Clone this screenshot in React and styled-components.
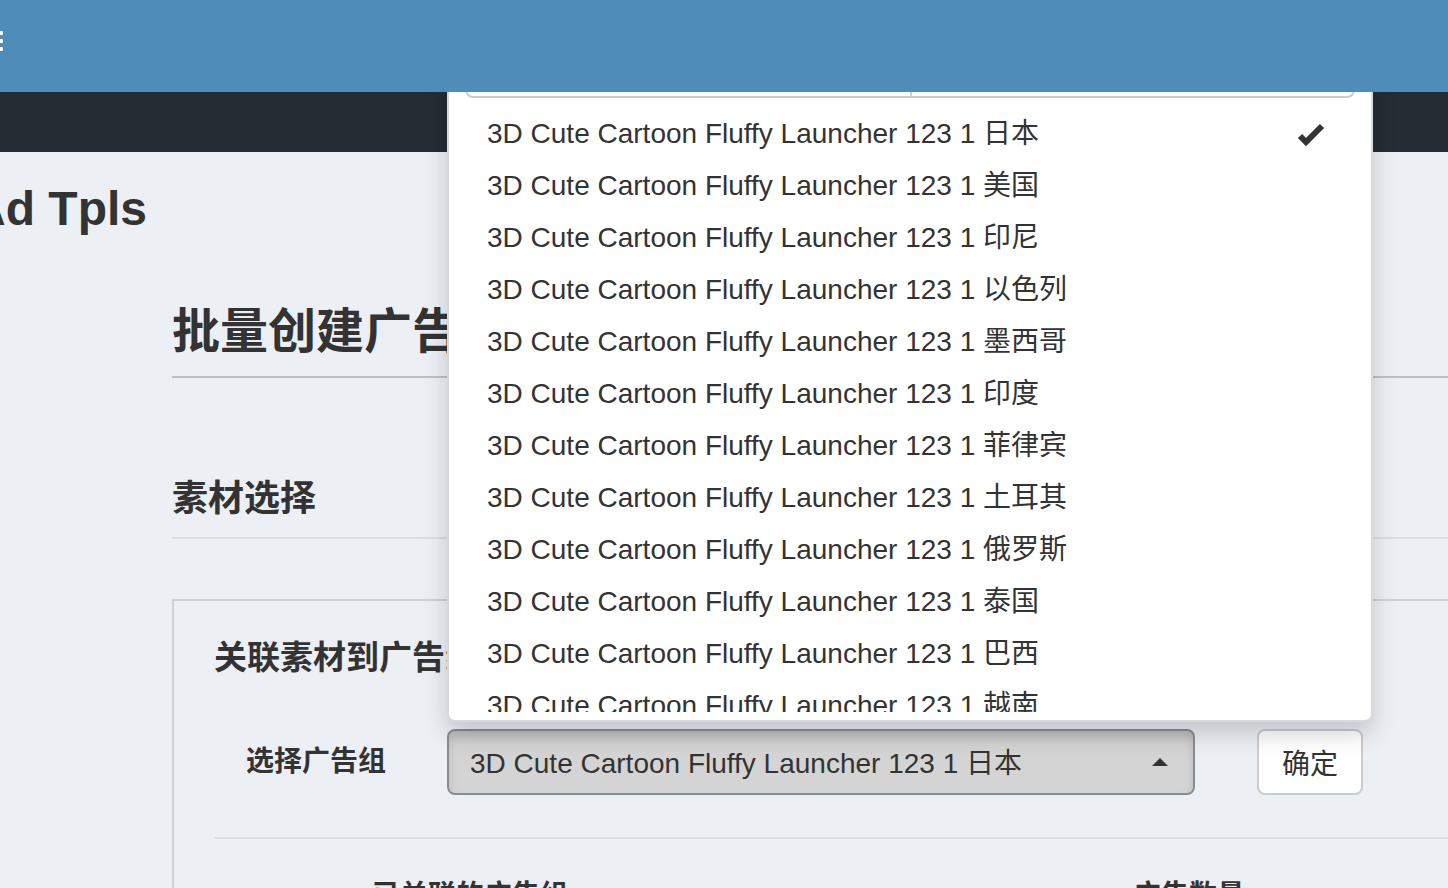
import React from 'react';
import styled, { createGlobalStyle } from 'styled-components';

const GlobalStyle = createGlobalStyle`
  html, body {
    margin: 0;
    padding: 0;
    overflow: hidden;
    background: #eceff4;
    font-family: "Liberation Sans", "Noto Sans CJK SC", sans-serif;
    color: #333;
  }
  * { box-sizing: border-box; }
`;

const Page = styled.div`
  width: 1448px;
  height: 888px;
  overflow: hidden;
  background: #eceff4;
`;

// blue top navbar, sits above the open dropdown
const TopBar = styled.header`
  position: relative;
  z-index: 20;
  height: 92px;
  background: #4e8cb9;
  display: flex;
  align-items: flex-start;
  padding-top: 31px;
`;

const MenuToggle = styled.div`
  margin-left: -18px;
  width: 21px;
  display: flex;
  flex-direction: column;
  gap: 4px;

  span {
    display: block;
    height: 4px;
    background: #fff;
    border-radius: 1px;
  }
`;

const SubBar = styled.div`
  height: 60px;
  background: #252c33;
`;

const Main = styled.main`
  padding-bottom: 40px;
`;

const PageTitle = styled.h1`
  margin: 30px 0 0 -29px;
  font-size: 48px;
  line-height: 53px;
  font-weight: 700;
  color: #333;
`;

const Content = styled.div`
  margin-left: 172px;
  width: 1400px;
`;

const PageHeader = styled.h2`
  margin: 65px 0 0;
  font-size: 48px;
  line-height: 60px;
  font-weight: 700;
  padding: 2px 0 14px;
  border-bottom: 2px solid #bdbfc3;
`;

const SectionTitle = styled.h3`
  margin: 97px 0 0;
  font-size: 36px;
  line-height: 44px;
  font-weight: 700;
  padding: 2px 0 16px;
  border-bottom: 2px solid #dcdde0;
`;

const Panel = styled.section`
  margin-top: 60px;
  border-top: 2px solid #cfd0d3;
  border-left: 2px solid #cfd0d3;
  padding: 37px 0 0 40px;
`;

const PanelTitle = styled.h4`
  margin: 0;
  font-size: 33px;
  line-height: 40px;
  font-weight: 700;
`;

const FormRow = styled.div`
  margin-top: 51px;
  display: flex;
  align-items: center;
  height: 66px;
`;

const FormLabel = styled.label`
  width: 233px;
  flex-shrink: 0;
  padding-left: 32px;
  font-size: 28px;
  font-weight: 700;
  line-height: 66px;
`;

const SelectWrap = styled.div`
  position: relative;
  width: 748px;
  flex-shrink: 0;
`;

const SelectButton = styled.div`
  height: 66px;
  display: flex;
  align-items: center;
  justify-content: space-between;
  padding: 0 25px 3px 21px;
  background: #d4d4d4;
  border: 2px solid #8c8c8c;
  border-radius: 8px;
  box-shadow: inset 0 6px 10px rgba(0, 0, 0, 0.125);
  font-size: 28px;
  color: #333;
  white-space: nowrap;
`;

const Caret = styled.span`
  width: 0;
  height: 0;
  margin-top: 3px;
  border-left: 8px solid transparent;
  border-right: 8px solid transparent;
  border-bottom: 8px solid #333;
`;

const DropMenu = styled.div`
  position: absolute;
  z-index: 10;
  left: 0;
  bottom: calc(100% + 7px);
  width: 926px;
  background: #fff;
  border: 2px solid rgba(0, 0, 0, 0.15);
  border-radius: 8px;
  box-shadow: 0 12px 24px rgba(0, 0, 0, 0.175);
  padding: 8px 0;
`;

const ActionsBox = styled.div`
  margin: 0 16px;
  height: 68px;
  border: 2px solid #ccc;
  border-radius: 8px;
  display: grid;
  grid-template-columns: 1fr 1fr;

  span + span {
    border-left: 2px solid #ccc;
  }
`;

const ItemList = styled.ul`
  list-style: none;
  margin: 10px 0 0;
  padding: 0;
  height: 604px;
  overflow: hidden;
`;

const Item = styled.li`
  position: relative;
  padding: 0 37px 0 38px;
  height: 52px;
  line-height: 52px;
  font-size: 28px;
  color: #333;
  white-space: nowrap;
`;

const Check = styled.svg`
  position: absolute;
  right: 46px;
  top: 14px;
`;

const ConfirmButton = styled.button`
  margin-left: 62px;
  width: 106px;
  height: 66px;
  flex-shrink: 0;
  background: #fff;
  border: 2px solid #ccc;
  border-radius: 8px;
  font-family: inherit;
  font-size: 28px;
  color: #333;
  padding: 0;
`;

const Divider = styled.hr`
  margin: 42px 0 0;
  border: 0;
  border-top: 2px solid #dcdde0;
`;

const TableHead = styled.div`
  margin-top: 37px;
  display: flex;
  font-size: 28px;
  font-weight: 700;
  line-height: 40px;
`;

const HeadCell = styled.div`
  width: ${p => p.$width || 'auto'};
  padding-left: ${p => p.$pad || 0};
  flex-shrink: 0;
`;

const countries = ['日本', '美国', '印尼', '以色列', '墨西哥', '印度', '菲律宾', '土耳其', '俄罗斯', '泰国', '巴西', '越南'];
const NAME = '3D Cute Cartoon Fluffy Launcher 123 1';

const App = () => (
  <Page>
    <GlobalStyle />
    <TopBar>
      <MenuToggle><span /><span /><span /></MenuToggle>
    </TopBar>
    <SubBar />
    <Main>
      <PageTitle>Ad Tpls</PageTitle>
      <Content>
        <PageHeader>批量创建广告</PageHeader>
        <SectionTitle>素材选择</SectionTitle>
        <Panel>
          <PanelTitle>关联素材到广告组</PanelTitle>
          <FormRow>
            <FormLabel>选择广告组</FormLabel>
            <SelectWrap>
              <SelectButton>
                <span>{NAME} 日本</span>
                <Caret />
              </SelectButton>
              <DropMenu>
                <ActionsBox><span /><span /></ActionsBox>
                <ItemList>
                  {countries.map((c, i) => (
                    <Item key={c}>
                      {NAME} {c}
                      {i === 0 && (
                        <Check width="28" height="26" viewBox="0 0 28 26">
                          <polyline points="3,14 9,20 25,4" fill="none" stroke="#333" strokeWidth="6" />
                        </Check>
                      )}
                    </Item>
                  ))}
                </ItemList>
              </DropMenu>
            </SelectWrap>
            <ConfirmButton>确定</ConfirmButton>
          </FormRow>
          <Divider />
          <TableHead>
            <HeadCell $width="919px" $pad="158px">已关联的广告组</HeadCell>
            <HeadCell>广告数量</HeadCell>
          </TableHead>
        </Panel>
      </Content>
    </Main>
  </Page>
);

export default App;
